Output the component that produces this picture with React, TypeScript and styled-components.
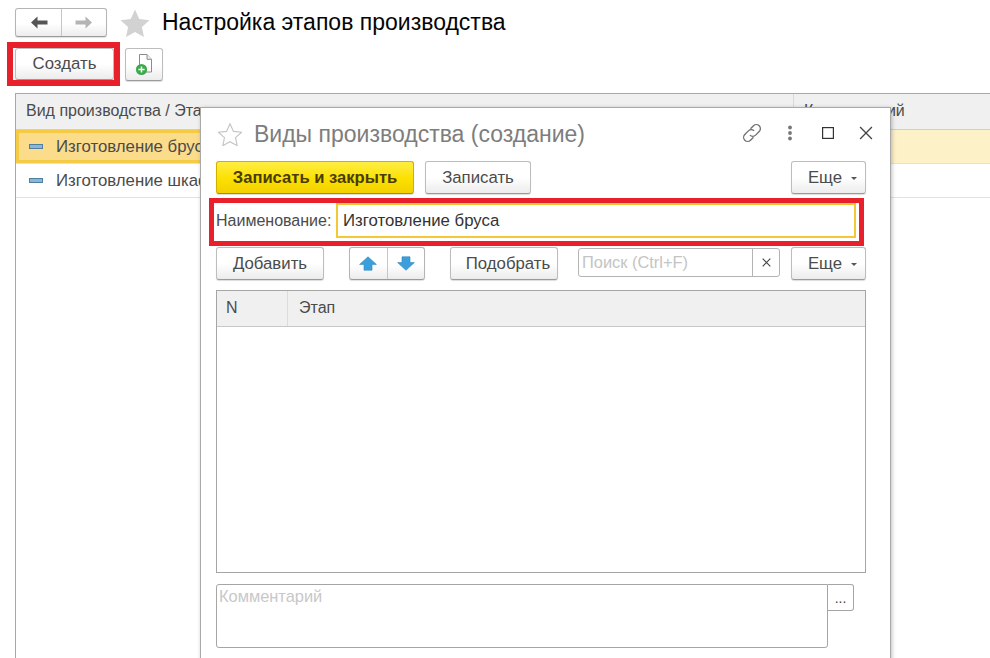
import * as React from "react";
import styled, { createGlobalStyle } from "styled-components";

const GlobalStyle = createGlobalStyle`
  html, body {
    margin: 0;
    height: 100%;
    overflow: hidden;
    background: #fff;
  }

  body {
    font-family: "Liberation Sans", Arial, sans-serif;
    font-size: 16px;
    color: #4b4b4b;
  }
`;

const StarIcon: React.FC<{ className?: string; hollow?: boolean }> = ({
  className,
  hollow,
}) => (
  <svg className={className} viewBox="0 0 30 28" aria-hidden="true">
    <path
      d="M15 .5l4.3 9.6 10.2 1.1-7.6 6.8 2.1 10L15 23l-9 5 2.1-10L.5 11.2l10.2-1.1z"
      fill={hollow ? "#fff" : "#d2d2d2"}
      stroke={hollow ? "#c4c4c4" : "none"}
      strokeWidth={hollow ? 1.4 : 0}
    />
  </svg>
);

const ArrowIcon: React.FC<{ flip?: boolean; color: string }> = ({ flip, color }) => (
  <svg
    width="18"
    height="13"
    viewBox="0 0 18 13"
    aria-hidden="true"
    style={flip ? { transform: "scaleX(-1)" } : undefined}
  >
    <path d="M7.5.5L1 6.5l6.5 6V8.4H17.5V4.6H7.5z" fill={color} />
  </svg>
);

const NewDocIcon = () => (
  <svg width="18" height="23" viewBox="0 0 18 23" aria-hidden="true">
    <path
      d="M4.5 1.5h7.5l4.5 4.8V19H4.5z"
      fill="#fff"
      stroke="#8b8b8b"
      strokeWidth="1"
    />
    <path d="M12 1.5v4.8h4.5" fill="#eee" stroke="#8b8b8b" strokeWidth="1" />
    <circle cx="6.5" cy="16.5" r="5.6" fill="#3bab4a" />
    <path d="M6.5 13.4v6.2M3.4 16.5h6.2" stroke="#fff" strokeWidth="1.5" />
  </svg>
);

const RowIcon = styled.span`
  display: block;
  flex: none;
  width: 14px;
  height: 5px;
  box-sizing: border-box;
  background: #8cb6d3;
  border: 1px solid #4f7f9e;
`;

const LinkIcon = () => (
  <svg width="22" height="22" viewBox="0 0 22 22" aria-hidden="true">
    <g fill="none" stroke="#6f6f6f" strokeWidth="1.3">
      <path d="M9.5 6.8l3-3a4 4 0 0 1 5.7 5.7l-3.6 3.6a4 4 0 0 1-5.7 0" />
      <path d="M12.5 15.2l-3 3a4 4 0 0 1-5.7-5.7l3.6-3.6a4 4 0 0 1 5.7 0" />
    </g>
  </svg>
);

const DotsIcon = () => (
  <svg width="6" height="16" viewBox="0 0 6 16" aria-hidden="true">
    <circle cx="3" cy="2.5" r="1.9" fill="#777" />
    <circle cx="3" cy="8" r="1.9" fill="#777" />
    <circle cx="3" cy="13.5" r="1.9" fill="#777" />
  </svg>
);

const SquareIcon = () => (
  <svg width="12" height="12" viewBox="0 0 12 12" aria-hidden="true">
    <rect x="0.6" y="0.6" width="10.8" height="10.8" fill="none" stroke="#333" strokeWidth="1.2" />
  </svg>
);

const CloseIcon: React.FC<{ size?: number; color?: string; weight?: number }> = ({
  size = 13,
  color = "#444",
  weight = 1.2,
}) => (
  <svg width={size} height={size} viewBox="0 0 13 13" aria-hidden="true">
    <path d="M1 1l11 11M12 1L1 12" stroke={color} strokeWidth={weight} fill="none" />
  </svg>
);

const BlueArrow: React.FC<{ down?: boolean }> = ({ down }) => (
  <svg
    width="18"
    height="15"
    viewBox="0 0 18 15"
    aria-hidden="true"
    style={down ? { transform: "scaleY(-1)" } : undefined}
  >
    <path
      d="M9 .8L17.4 8.4H13V14.2H5V8.4H.6z"
      fill="#3b9fdc"
      stroke="#2d86c0"
      strokeWidth=".6"
    />
  </svg>
);

const Page = styled.div`
  position: relative;
  width: 990px;
  height: 658px;
  overflow: hidden;
  padding: 8px 0 0 15px;
  box-sizing: border-box;
  display: flex;
  flex-direction: column;
`;

const Header = styled.div`
  display: flex;
  align-items: center;
  height: 29px;
`;

const Group = styled.div`
  display: flex;
  height: 100%;
  box-sizing: border-box;
  border: 1px solid #b5b5b5;
  border-bottom-color: #9a9a9a;
  border-radius: 3px;
  background: linear-gradient(#fff 55%, #ececec);
  box-shadow: 0 1px 1px rgba(0, 0, 0, 0.12);
`;

const GroupCell = styled.div<{ $width: number }>`
  width: ${(p) => p.$width}px;
  display: flex;
  align-items: center;
  justify-content: center;

  & + & {
    border-left: 1px solid #c6c6c6;
  }
`;

const HeaderStar = styled(StarIcon)`
  width: 30px;
  height: 28px;
  margin-left: 13px;
`;

const Title = styled.h1`
  margin: 0 0 0 12px;
  font-size: 23px;
  font-weight: 400;
  color: #050505;
  white-space: nowrap;
`;

const CommandBar = styled.div`
  display: flex;
  align-items: flex-start;
  margin-top: 11px;
  gap: 11px;
`;

const Button = styled.button<{ $width: number; $primary?: boolean; $inset?: number }>`
  width: ${(p) => p.$width}px;
  height: 33px;
  padding: 0 0 0 ${(p) => p.$inset ?? 0}px;
  flex: none;
  box-sizing: border-box;
  font: inherit;
  font-size: ${(p) => (p.$primary ? 16.6 : 16.8)}px;
  font-weight: ${(p) => (p.$primary ? 700 : 400)};
  color: ${(p) => (p.$primary ? "#4a3c00" : "#4b4b4b")};
  border: 1px solid ${(p) => (p.$primary ? "#d0b000" : "#bdbdbd")};
  border-bottom-color: ${(p) => (p.$primary ? "#a88d00" : "#9a9a9a")};
  border-radius: 3px;
  background: ${(p) =>
    p.$primary
      ? "linear-gradient(#ffee44, #fbe000 55%, #f3d000)"
      : "linear-gradient(#fff 50%, #ececec)"};
  box-shadow: 0 1px 1px rgba(0, 0, 0, 0.14);
  display: flex;
  align-items: center;
  justify-content: center;
`;

const Highlighted = styled.div`
  display: flex;
  height: 32px;
  margin-left: -2px;
  padding-left: 2px;
  outline: 6px solid #e8202c;

  ${Button} {
    height: 32px;
  }
`;

const List = styled.div`
  margin-top: 12px;
  flex: 1;
  border-top: 1px solid #a8a8a8;
  border-left: 1px solid #a8a8a8;
`;

const ListHeader = styled.div`
  display: grid;
  grid-template-columns: 777px 1fr;
  height: 35px;
  background: #f0f0f0;
  border-bottom: 1px solid #cfcfcf;
  line-height: 34px;
`;

const ListHeaderCell = styled.div`
  padding-left: 10px;
  white-space: nowrap;

  & + & {
    border-left: 1px solid #d8d8d8;
  }
`;

const ListRow = styled.div<{ $selected?: boolean }>`
  display: flex;
  height: 33px;
  border-bottom: 1px solid #e2e2e2;
  background: ${(p) => (p.$selected ? "#fdf1c8" : "#fff")};
`;

const ListRowName = styled.div<{ $selected?: boolean }>`
  width: 300px;
  box-sizing: border-box;
  display: flex;
  align-items: center;
  gap: 13px;
  font-size: 16.8px;
  padding-left: ${(p) => (p.$selected ? "10px" : "13px")};
  white-space: nowrap;
  border: ${(p) => (p.$selected ? "3px solid #f5cb45" : "none")};
  background: ${(p) => (p.$selected ? "#fbdc8b" : "transparent")};
`;

const Dialog = styled.div`
  position: absolute;
  left: 200px;
  top: 107px;
  width: 691px;
  height: 570px;
  box-sizing: border-box;
  background: #fff;
  border: 1px solid #a9a9a9;
  box-shadow: 1px 1px 4px rgba(0, 0, 0, 0.25);
  padding: 0 24px 0 15px;
  display: flex;
  flex-direction: column;
`;

const DialogHeader = styled.div`
  display: flex;
  align-items: center;
  height: 53px;
`;

const DialogStar = styled(StarIcon)`
  width: 24px;
  height: 23px;
  margin: 0 0 0 2px;
`;

const DialogTitle = styled.div`
  margin-left: 12px;
  flex: 1;
  font-size: 23px;
  color: #7d7d7d;
  white-space: nowrap;
`;

const WindowTools = styled.div`
  display: flex;
  align-items: center;
  margin: -3px -19px 0 0;
`;

const WindowTool = styled.div`
  width: 38px;
  display: flex;
  justify-content: center;
`;

const ActionRow = styled.div<{ $gap?: number }>`
  display: flex;
  align-items: flex-start;
  gap: ${(p) => p.$gap ?? 11}px;
`;

const Push = styled.div`
  flex: 1;
`;

const MoreCaret = styled.span`
  width: 0;
  height: 0;
  margin-left: 9px;
  margin-top: 2px;
  border: 3px solid transparent;
  border-top: 3px solid #555;
  border-bottom: 0;
`;

const NameField = styled.div`
  position: relative;
  display: flex;
  align-items: center;
  width: 640px;
  height: 35px;
  margin-top: 9px;
`;

const RedFrame = styled.div`
  position: absolute;
  left: -7px;
  top: -5px;
  width: 655px;
  height: 48px;
  box-sizing: border-box;
  border: 5px solid #e8202c;
  pointer-events: none;
`;

const NameLabel = styled.label`
  width: 120px;
  flex: none;
  white-space: nowrap;
`;

const NameInput = styled.div`
  flex: 1;
  height: 35px;
  box-sizing: border-box;
  border: 2px solid #f2c935;
  padding-left: 5px;
  font-size: 16.8px;
  line-height: 31px;
  color: #333;
`;

const TableBar = styled(ActionRow)`
  margin-top: 9px;
`;

const ArrowGroup = styled(Group)`
  width: 76px;
  height: 33px;
  flex: none;
  margin: 0 14px;
`;

const Search = styled.div`
  display: flex;
  width: 202px;
  height: 29px;
  flex: none;
  margin: 1px 0 0 9px;
  box-sizing: border-box;
  border: 1px solid #b4b4b4;
  border-radius: 3px;
  line-height: 27px;
`;

const SearchText = styled.div`
  flex: 1;
  padding-left: 3px;
  font-size: 16.4px;
  color: #c4c4c4;
  white-space: nowrap;
`;

const SearchClear = styled.div`
  width: 26px;
  border-left: 1px solid #b4b4b4;
  display: flex;
  align-items: center;
  justify-content: center;
`;

const Grid = styled.div`
  width: 650px;
  height: 283px;
  flex: none;
  margin-top: 10px;
  box-sizing: border-box;
  border: 1px solid #a5a5a5;
`;

const GridHeader = styled.div`
  display: grid;
  grid-template-columns: 70px 1fr;
  height: 35px;
  background: #f0f0f0;
  border-bottom: 1px solid #c8c8c8;
  line-height: 33px;
`;

const GridHeaderCell = styled.div`
  padding-left: 9px;

  & + & {
    border-left: 1px solid #dcdcdc;
    padding-left: 11px;
  }
`;

const CommentRow = styled.div`
  display: flex;
  align-items: flex-start;
  margin-top: 11px;
`;

const CommentBox = styled.div`
  width: 612px;
  height: 64px;
  box-sizing: border-box;
  border: 1px solid #a5a5a5;
  border-radius: 3px 0 3px 3px;
  padding: 2px 2px;
  color: #c8c8c8;
  font-size: 16.4px;
`;

const PickButton = styled.div`
  width: 26px;
  height: 27px;
  box-sizing: border-box;
  border: 1px solid #a5a5a5;
  border-left: 0;
  border-radius: 0 3px 3px 0;
  color: #444;
  font-size: 14px;
  line-height: 27px;
  text-align: center;
`;

export default function App() {
  return (
    <>
      <GlobalStyle />
      <Page>
        <Header>
          <Group>
            <GroupCell $width={45}>
              <ArrowIcon color="#555" />
            </GroupCell>
            <GroupCell $width={44}>
              <ArrowIcon flip color="#b4b4b4" />
            </GroupCell>
          </Group>
          <HeaderStar />
          <Title>Настройка этапов производства</Title>
        </Header>

        <CommandBar>
          <Highlighted>
            <Button $width={99}>Создать</Button>
          </Highlighted>
          <Button $width={38}>
            <NewDocIcon />
          </Button>
        </CommandBar>

        <List>
          <ListHeader>
            <ListHeaderCell>Вид производства / Этап</ListHeaderCell>
            <ListHeaderCell>Комментарий</ListHeaderCell>
          </ListHeader>
          <ListRow $selected>
            <ListRowName $selected>
              <RowIcon />
              Изготовление бруса
            </ListRowName>
          </ListRow>
          <ListRow>
            <ListRowName>
              <RowIcon />
              Изготовление шкафа
            </ListRowName>
          </ListRow>
        </List>

        <Dialog>
          <DialogHeader>
            <DialogStar hollow />
            <DialogTitle>Виды производства (создание)</DialogTitle>
            <WindowTools>
              <WindowTool>
                <LinkIcon />
              </WindowTool>
              <WindowTool>
                <DotsIcon />
              </WindowTool>
              <WindowTool>
                <SquareIcon />
              </WindowTool>
              <WindowTool>
                <CloseIcon size={14} />
              </WindowTool>
            </WindowTools>
          </DialogHeader>

          <ActionRow>
            <Button $width={198} $primary>
              Записать и закрыть
            </Button>
            <Button $width={106}>Записать</Button>
            <Push />
            <Button $width={75} $inset={8}>
              Еще
              <MoreCaret />
            </Button>
          </ActionRow>

          <NameField>
            <NameLabel>Наименование:</NameLabel>
            <NameInput>Изготовление бруса</NameInput>
            <RedFrame />
          </NameField>

          <TableBar>
            <Button $width={108}>Добавить</Button>
            <ArrowGroup>
              <GroupCell $width={38}>
                <BlueArrow />
              </GroupCell>
              <GroupCell $width={37}>
                <BlueArrow down />
              </GroupCell>
            </ArrowGroup>
            <Button $width={108} $inset={8}>
              Подобрать
            </Button>
            <Search>
              <SearchText>Поиск (Ctrl+F)</SearchText>
              <SearchClear>
                <CloseIcon size={9} color="#444" weight={1.6} />
              </SearchClear>
            </Search>
            <Button $width={75} $inset={8}>
              Еще
              <MoreCaret />
            </Button>
          </TableBar>

          <Grid>
            <GridHeader>
              <GridHeaderCell>N</GridHeaderCell>
              <GridHeaderCell>Этап</GridHeaderCell>
            </GridHeader>
          </Grid>

          <CommentRow>
            <CommentBox>Комментарий</CommentBox>
            <PickButton>...</PickButton>
          </CommentRow>
        </Dialog>
      </Page>
    </>
  );
}
